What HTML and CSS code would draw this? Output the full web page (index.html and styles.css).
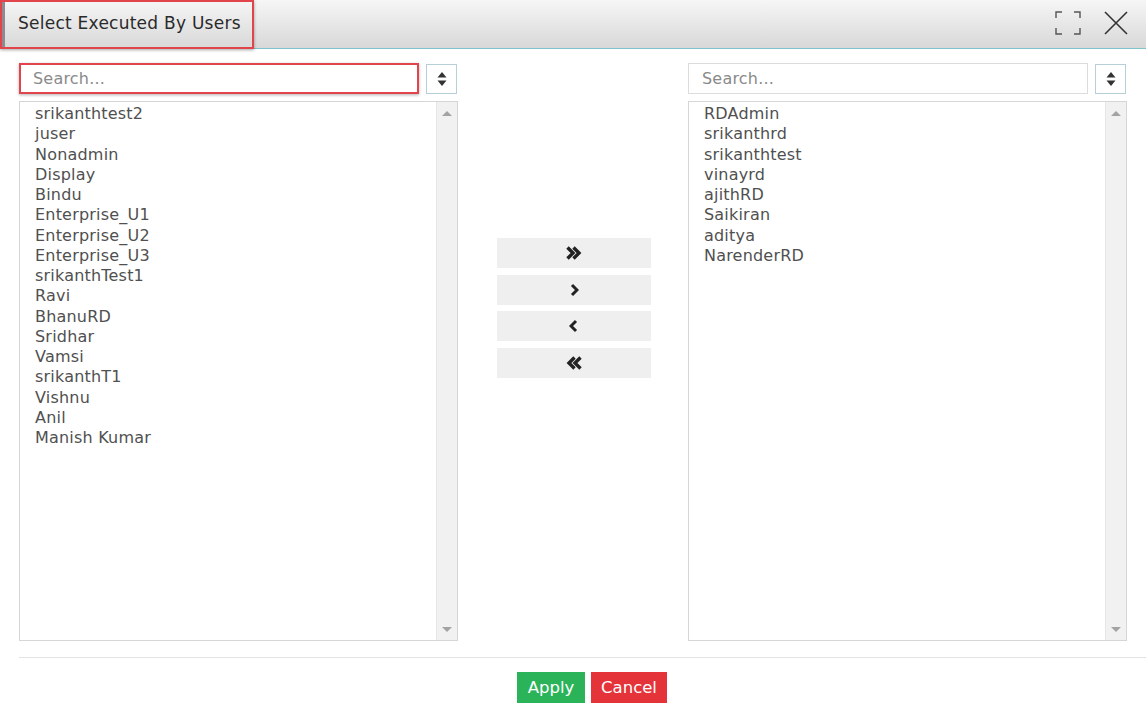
FILE: index.html
```html
<!DOCTYPE html>
<html>
<head>
<meta charset="utf-8">
<link rel="stylesheet" href="styles.css">
</head>
<body>
<div class="dialog">
  <div class="header">
    <div class="title"><span class="title-text">Select Executed By Users</span></div>
    <div class="header-tools">
      <svg class="tool-icon" width="26" height="24" viewBox="0 0 26 24">
        <path d="M1 7V1H7 M19 1H25V7 M25 17V23H19 M7 23H1V17" fill="none" stroke="#555" stroke-width="1.4"/>
      </svg>
      <svg class="tool-icon" width="26" height="24" viewBox="0 0 26 24">
        <path d="M2 1L24 23 M24 1L2 23" fill="none" stroke="#333" stroke-width="1.6"/>
      </svg>
    </div>
  </div>
  <div class="body">
    <div class="pane">
      <div class="search-row">
        <input class="search search-active" placeholder="Search...">
        <button class="sort-btn"><svg width="10" height="16" viewBox="0 0 10 16"><path d="M5 1L9.5 6.5H0.5Z M5 15L9.5 9.5H0.5Z" fill="#333"/></svg></button>
      </div>
      <div class="list">
        <div class="items">
          <div>srikanthtest2</div>
          <div>juser</div>
          <div>Nonadmin</div>
          <div>Display</div>
          <div>Bindu</div>
          <div>Enterprise_U1</div>
          <div>Enterprise_U2</div>
          <div>Enterprise_U3</div>
          <div>srikanthTest1</div>
          <div>Ravi</div>
          <div>BhanuRD</div>
          <div>Sridhar</div>
          <div>Vamsi</div>
          <div>srikanthT1</div>
          <div>Vishnu</div>
          <div>Anil</div>
          <div>Manish Kumar</div>
        </div>
        <div class="scrollbar">
          <span class="arrow-up"></span>
          <span class="arrow-down"></span>
        </div>
      </div>
    </div>
    <div class="middle">
      <button class="move-btn"><svg width="16" height="14" viewBox="0 0 16 14"><path d="M1.5 1.5L7 7L1.5 12.5 M7.5 1.5L13 7L7.5 12.5" fill="none" stroke="#222" stroke-width="3.4"/></svg></button>
      <button class="move-btn"><svg width="10" height="14" viewBox="0 0 10 14"><path d="M3 2L8 7L3 12" fill="none" stroke="#222" stroke-width="3"/></svg></button>
      <button class="move-btn"><svg width="10" height="14" viewBox="0 0 10 14"><path d="M7 2L2 7L7 12" fill="none" stroke="#222" stroke-width="3"/></svg></button>
      <button class="move-btn"><svg width="16" height="14" viewBox="0 0 16 14"><path d="M8.5 1.5L3 7L8.5 12.5 M14.5 1.5L9 7L14.5 12.5" fill="none" stroke="#222" stroke-width="3.4"/></svg></button>
    </div>
    <div class="pane">
      <div class="search-row">
        <input class="search" placeholder="Search...">
        <button class="sort-btn"><svg width="10" height="16" viewBox="0 0 10 16"><path d="M5 1L9.5 6.5H0.5Z M5 15L9.5 9.5H0.5Z" fill="#333"/></svg></button>
      </div>
      <div class="list">
        <div class="items">
          <div>RDAdmin</div>
          <div>srikanthrd</div>
          <div>srikanthtest</div>
          <div>vinayrd</div>
          <div>ajithRD</div>
          <div>Saikiran</div>
          <div>aditya</div>
          <div>NarenderRD</div>
        </div>
        <div class="scrollbar">
          <span class="arrow-up"></span>
          <span class="arrow-down"></span>
        </div>
      </div>
    </div>
  </div>
  <div class="footer">
    <button class="btn btn-apply">Apply</button>
    <button class="btn btn-cancel">Cancel</button>
  </div>
</div>
</body>
</html>
```

FILE: styles.css
```css
* { box-sizing: border-box; }
html, body { margin: 0; padding: 0; background: #fff; }
body { font-family: "DejaVu Sans", Verdana, sans-serif; color: #444; width: 1146px; height: 712px; overflow: hidden; }

.header {
  height: 49px;
  background: linear-gradient(#f6f6f6, #d8d8d8);
  border-bottom: 1px solid #7fc3cd;
  display: flex;
  align-items: stretch;
  justify-content: space-between;
}
.title {
  width: 254px;
  height: 49px;
  border: 2px solid #e2444b;
  box-shadow: 0 1px 3px rgba(0,0,0,0.35);
  display: flex;
  align-items: center;
  position: relative;
  z-index: 1;
  margin-bottom: -1px;
}
.title::before {
  content: "";
  width: 3px;
  align-self: stretch;
  background: #8f8a92;
}
.title-text {
  font-size: 17px;
  letter-spacing: 0.25px;
  color: #2a2a2a;
  padding-left: 13px;
  padding-bottom: 4px;
}
.header-tools {
  display: flex;
  align-items: center;
  gap: 22px;
  padding-right: 17px;
  padding-bottom: 2px;
}
.tool-icon { display: block; }

.body {
  display: flex;
  padding: 14px 19px 0 19px;
  height: 592px;
}
.pane { width: 439px; display: flex; flex-direction: column; }
.search-row { display: flex; align-items: center; gap: 7px; height: 31px; }
.search {
  width: 400px;
  height: 31px;
  border: 1px solid #dcdcdc;
  font-family: "DejaVu Sans", Verdana, sans-serif;
  font-size: 16px;
  letter-spacing: 0.2px;
  padding: 0 13px;
  color: #444;
  outline: none;
}
.search::placeholder { color: #8a8a8a; }
.search-active {
  border: 2px solid #e2444b;
  box-shadow: 0 1px 3px rgba(0,0,0,0.3);
  padding-left: 12px;
}
.sort-btn {
  width: 31px;
  height: 30px;
  border: 1px solid #b7cfd8;
  background: #fff;
  padding: 0;
  display: flex;
  align-items: center;
  justify-content: center;
}
.list {
  margin-top: 7px;
  height: 540px;
  border: 1px solid #d6d6d6;
  display: flex;
}
.items {
  flex: 1;
  padding: 2px 0 0 15px;
  font-size: 16px;
  letter-spacing: 0.2px;
  line-height: 20.25px;
  color: #505050;
}
.scrollbar {
  width: 21px;
  background: #f1f1f1;
  border-left: 1px solid #e6e6e6;
  display: flex;
  flex-direction: column;
  justify-content: space-between;
  align-items: center;
  padding: 9px 0 8px;
}
.arrow-up { width: 0; height: 0; border-left: 5px solid transparent; border-right: 5px solid transparent; border-bottom: 5px solid #a3a3a3; }
.arrow-down { width: 0; height: 0; border-left: 5px solid transparent; border-right: 5px solid transparent; border-top: 5px solid #a3a3a3; }

.middle {
  width: 230px;
  display: flex;
  flex-direction: column;
  align-items: center;
  padding-top: 175px;
  padding-left: 2px;
  gap: 6.5px;
}
.move-btn {
  width: 154px;
  height: 30px;
  background: #efefef;
  border: none;
  padding: 0;
  display: flex;
  align-items: center;
  justify-content: center;
}

.footer {
  margin-top: 16px;
  margin-left: 19px;
  border-top: 1px solid #e3e3e3;
  padding: 14px 0 0 19px;
  display: flex;
  justify-content: center;
  gap: 6px;
}
.btn {
  height: 31px;
  border: none;
  color: #fff;
  font-family: "DejaVu Sans", Verdana, sans-serif;
  font-size: 16.5px;
  padding: 0;
}
.btn-apply { width: 68px; background: #2bb35a; }
.btn-cancel { width: 76px; background: #e4343a; }
```
